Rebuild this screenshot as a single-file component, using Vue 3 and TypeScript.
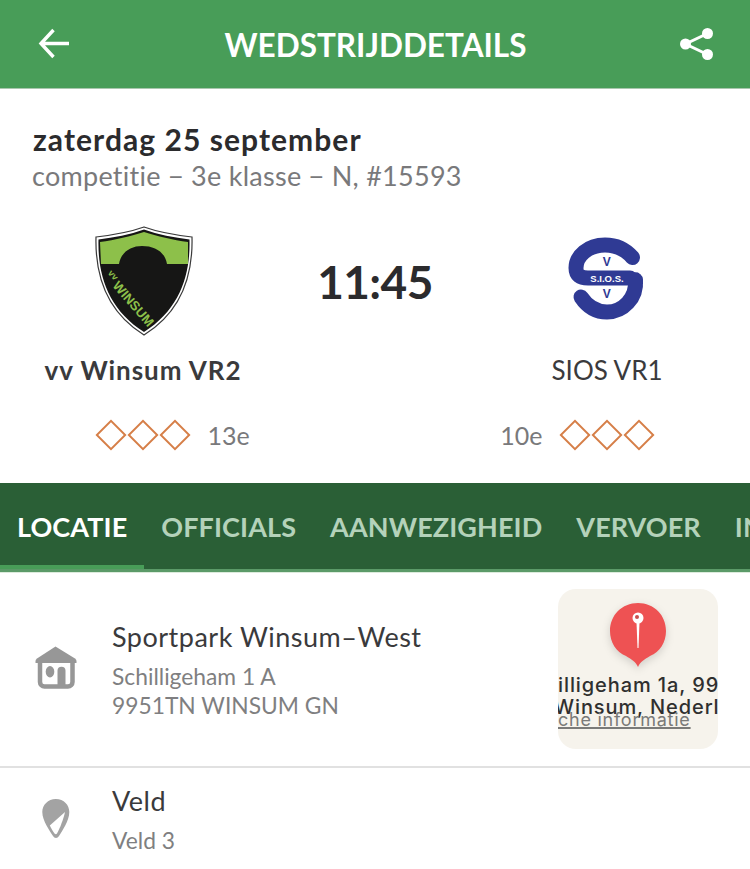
<script setup lang="ts">
const tabs = ['LOCATIE', 'OFFICIALS', 'AANWEZIGHEID', 'VERVOER', 'INFO']
const diamonds = [0, 1, 2]
</script>

<template>
  <div class="page">
    <header class="topbar">
      <svg width="34" height="34" viewBox="0 0 34 34">
        <path d="M32 16.5H4.500M16.500 3 4 16.500 16.500 30" fill="none" stroke="#fff" stroke-width="3.400" />
      </svg>
      <h1>WEDSTRIJDDETAILS</h1>
      <svg width="34" height="34" viewBox="0 0 34 34">
        <circle cx="27.500" cy="6.500" r="5.500" fill="#fff" />
        <circle cx="5.500" cy="17" r="5.500" fill="#fff" />
        <circle cx="27.500" cy="27.500" r="5.500" fill="#fff" />
        <path d="M27.500 6.500 5.500 17l22 10.500" fill="none" stroke="#fff" stroke-width="3" />
      </svg>
    </header>

    <section class="match">
      <div class="date">zaterdag 25 september</div>
      <div class="league">competitie − 3e klasse − N, #15593</div>

      <div class="teams">
        <div class="team">
          <svg class="crest home-crest" width="98" height="110" viewBox="0 0 98 110">
            <path d="M49 1C63 6 80 9 97 11 98 50 86 86 49 109 12 86 0 50 1 11 18 9 35 6 49 1Z" fill="#fff" stroke="#3a3a3a" stroke-width="1.200" />
            <path d="M49 3.500C63 8.500 79 11.500 94.500 13.500 95.500 50 84 84 49 106 14 84 2.500 50 3.500 13.500 19 11.500 35 8.500 49 3.500Z" fill="#161615" />
            <path d="M49 6C62 10 78 14 93 16L93 38H72C70 26 60 20 47 20 36 20 26 26 24 38H6L5 16C20 14 36 10 49 6Z" fill="#8dc04a" />
            <text class="crest-text" transform="translate(12.600 47.300) rotate(49)">vv</text>
            <text class="crest-text big" transform="translate(17 60) rotate(49)" textLength="55" lengthAdjust="spacingAndGlyphs">WINSUM</text>
          </svg>
          <div class="team-name home">vv Winsum VR2</div>
          <div class="rank">
            <div class="diamonds"><span v-for="d in diamonds" :key="d" class="diamond"></span></div>
            <span class="pos after">13e</span>
          </div>
        </div>

        <div class="time">11:45</div>

        <div class="team">
          <svg class="crest" width="98" height="110" viewBox="0 0 98 110">
            <path d="M74.500 31.500C68 24 59 19 47 19 30 19 18 30 18 42 18 49 22 52 30 52H72" fill="none" stroke="#2f3a94" stroke-width="15" stroke-linecap="round" />
            <path d="M77.500 54C79 72 65 86 49 86 37 86 29 80 23 71" fill="none" stroke="#2f3a94" stroke-width="15" stroke-linecap="round" />
            <path d="M24 46.500H80Q85 50 85 58H24Z" fill="#2f3a94" />
            <text class="sios" x="49" y="56">S.I.O.S.</text>
            <text class="sios-v" x="48.700" y="40">V</text>
            <text class="sios-v" x="48.700" y="72">V</text>
          </svg>
          <div class="team-name">SIOS VR1</div>
          <div class="rank">
            <span class="pos before">10e</span>
            <div class="diamonds"><span v-for="d in diamonds" :key="d" class="diamond"></span></div>
          </div>
        </div>
      </div>
    </section>

    <nav class="tabs">
      <div v-for="(tab, i) in tabs" :key="tab" class="tab" :class="{ active: i === 0 }">{{ tab }}</div>
    </nav>

    <section class="row location">
      <svg class="row-icon" width="44" height="46" viewBox="0 0 44 46">
        <path d="M20.500 1.500 40 13.500Q41.500 14.500 41.500 16V18H.5V16Q.5 14.500 2 13.500Z" fill="#979797" />
        <path d="M5 16V37A4.500 4.500 0 0 0 9.500 41.500H33A4.500 4.500 0 0 0 37.500 37V16" fill="none" stroke="#979797" stroke-width="4.500" />
        <ellipse cx="15" cy="26.700" rx="4.300" ry="5.700" fill="#979797" />
        <path d="M22.500 42V25.700a4 4 0 0 1 8 0V42Z" fill="#979797" />
      </svg>
      <div class="row-text">
        <div class="row-title">Sportpark Winsum–West</div>
        <div class="row-sub">Schilligeham 1 A</div>
        <div class="row-sub">9951TN WINSUM GN</div>
      </div>
      <div class="map">
        <svg class="pin" width="58" height="66" viewBox="0 0 58 66">
          <path d="M29 65C27 60 22 57 17 54 7 50 1 40 1 29 1 13 13 1 29 1S57 13 57 29C57 40 51 50 41 54 36 57 31 60 29 65Z" fill="#ee5253" />
          <circle cx="29" cy="16" r="5.500" fill="#fff" />
          <circle cx="28" cy="15" r="2" fill="#c9504f" />
          <path d="M27.500 20h3l-1 26h-1Z" fill="#fff" />
        </svg>
        <div class="map-address">illigeham 1a, 9951<br /><span class="line-two">Winsum, Nederland</span></div>
        <div class="map-link">che informatie</div>
      </div>
    </section>

    <section class="row field">
      <svg class="row-icon" width="44" height="46" viewBox="0 0 44 46">
        <path d="M20.800 4C29 4 34.300 10 34.300 17 34.300 26 27 36 24 41 22.500 43.500 19.500 43.500 18 41 15 36 7.300 26 7.300 17 7.300 10 13 4 20.800 4Z" fill="#a3a3a3" />
        <path d="M30 17 14.800 30.500C16 33 18 36.500 19.500 38.500 20.500 39.500 21.300 39.500 22 38.500 25 33 28.500 24 30 17Z" fill="#fff" />
      </svg>
      <div class="row-text">
        <div class="row-title">Veld</div>
        <div class="row-sub">Veld 3</div>
      </div>
    </section>
  </div>
</template>

<style scoped>
.page {
  width: 750px;
  height: 869px;
  overflow: hidden;
  background: #fff;
  font-family: Lato, 'Noto Sans', sans-serif;
  color: #2b2b2d;
}

.topbar {
  box-sizing: border-box;
  height: 89px;
  background: #489d58;
  border-bottom: 1px solid #a9c7ae;
  display: flex;
  align-items: center;
  justify-content: space-between;
  padding: 0 36px 1px 37px;
}

.topbar h1 {
  margin: 0;
  padding-top: 3px;
  color: #fff;
  font-size: 31.500px;
  font-weight: 700;
}

.match {
  box-sizing: border-box;
  height: 394px;
  padding-top: 32px;
}

.date {
  padding-left: 33px;
  font-size: 30px;
  line-height: 36px;
  font-weight: 700;
  letter-spacing: 1.050px;
}

.league {
  padding-left: 32px;
  font-size: 27px;
  line-height: 38px;
  color: #79797b;
  letter-spacing: 0.270px;
}

.teams {
  display: grid;
  grid-template-columns: 286px 178px 286px;
  margin-top: 31px;
}

.team {
  display: flex;
  flex-direction: column;
  align-items: center;
}

.home-crest {
  margin-left: 2px;
}

.crest-text {
  font-family: 'Liberation Sans', sans-serif;
  font-weight: 700;
  font-size: 9px;
  fill: #8dc04a;
}

.crest-text.big {
  font-size: 13px;
}

.sios {
  font-family: 'Liberation Sans', sans-serif;
  font-weight: 700;
  font-size: 9.500px;
  fill: #fff;
  text-anchor: middle;
}

.sios-v {
  font-family: 'Liberation Sans', sans-serif;
  font-weight: 700;
  font-size: 12px;
  fill: #2f3a94;
  text-anchor: middle;
}

.team-name {
  margin-top: 17px;
  font-size: 26px;
  line-height: 34px;
  color: #3a3a3c;
}

.team-name.home {
  font-weight: 700;
  letter-spacing: 0.950px;
}

.time {
  text-align: center;
  font-size: 46px;
  font-weight: 700;
  line-height: 56px;
  padding-top: 28px;
  letter-spacing: -0.600px;
}

.rank {
  display: grid;
  grid-template-columns: 1fr auto 1fr;
  align-items: center;
  width: 100%;
  margin-top: 30px;
  height: 36px;
}

.diamonds {
  grid-column: 2;
  grid-row: 1;
  display: flex;
}

.diamond {
  width: 22px;
  height: 22px;
  margin: 0 5px;
  box-sizing: border-box;
  border: 2.500px solid #d67f48;
  transform: rotate(45deg);
}

.pos {
  grid-row: 1;
  font-size: 25px;
  color: #79797b;
}

.pos.after {
  grid-column: 3;
  margin-left: 16.500px;
}

.pos.before {
  grid-column: 1;
  justify-self: end;
  margin-right: 16.500px;
}

.tabs {
  box-sizing: border-box;
  height: 89px;
  background: #2a5f36;
  border-bottom: 3px solid #5b9a68;
  display: flex;
  overflow: hidden;
  box-shadow: 0 1px 0 #dcebdc;
}

.tab {
  flex: none;
  height: 86px;
  padding: 0 17px;
  line-height: 88px;
  font-size: 27px;
  font-weight: 700;
  color: #b4d2ba;
  letter-spacing: 0.100px;
}

.tab.active {
  color: #fff;
  box-shadow: inset 0 -4px 0 #489d58;
}

.row {
  display: flex;
  align-items: center;
  box-sizing: border-box;
}

.location {
  height: 196px;
  border-bottom: 2px solid #e1e1e1;
  padding: 0 32px 0 35px;
}

.field {
  height: 100px;
  padding: 0 32px 0 35px;
}

.location .row-icon {
  margin-bottom: 2px;
}

.row-icon {
  flex: none;
}

.row-text {
  flex: 1;
  margin-left: 33px;
  color: #7f7f81;
  font-size: 22.800px;
  line-height: 29px;
  padding-top: 2px;
}

.field .row-text {
  padding-top: 3px;
}

.row-title {
  font-size: 27px;
  line-height: 34px;
  margin-bottom: 8px;
  color: #3a3a3c;
  letter-spacing: 0.500px;
}

.map {
  position: relative;
  flex: none;
  width: 160px;
  height: 160px;
  border-radius: 18px;
  background: #f6f3ec;
  overflow: hidden;
}

.pin {
  position: absolute;
  left: 51px;
  top: 13px;
  filter: drop-shadow(0 3px 4px rgba(0, 0, 0, 0.15));
}

.map-address {
  position: absolute;
  left: 0;
  top: 85px;
  width: 220px;
  font-family: Inter, sans-serif;
  font-size: 20px;
  line-height: 22px;
  font-weight: 500;
  color: #2f2f2f;
  white-space: nowrap;
  letter-spacing: 0.900px;
}

.line-two {
  margin-left: -4px;
}

.map-link {
  position: absolute;
  left: 0;
  top: 120px;
  font-family: Inter, sans-serif;
  font-size: 18px;
  line-height: 22px;
  color: #7a7a78;
  text-decoration: underline;
  text-decoration-thickness: 2px;
  letter-spacing: 0.750px;
}
</style>
